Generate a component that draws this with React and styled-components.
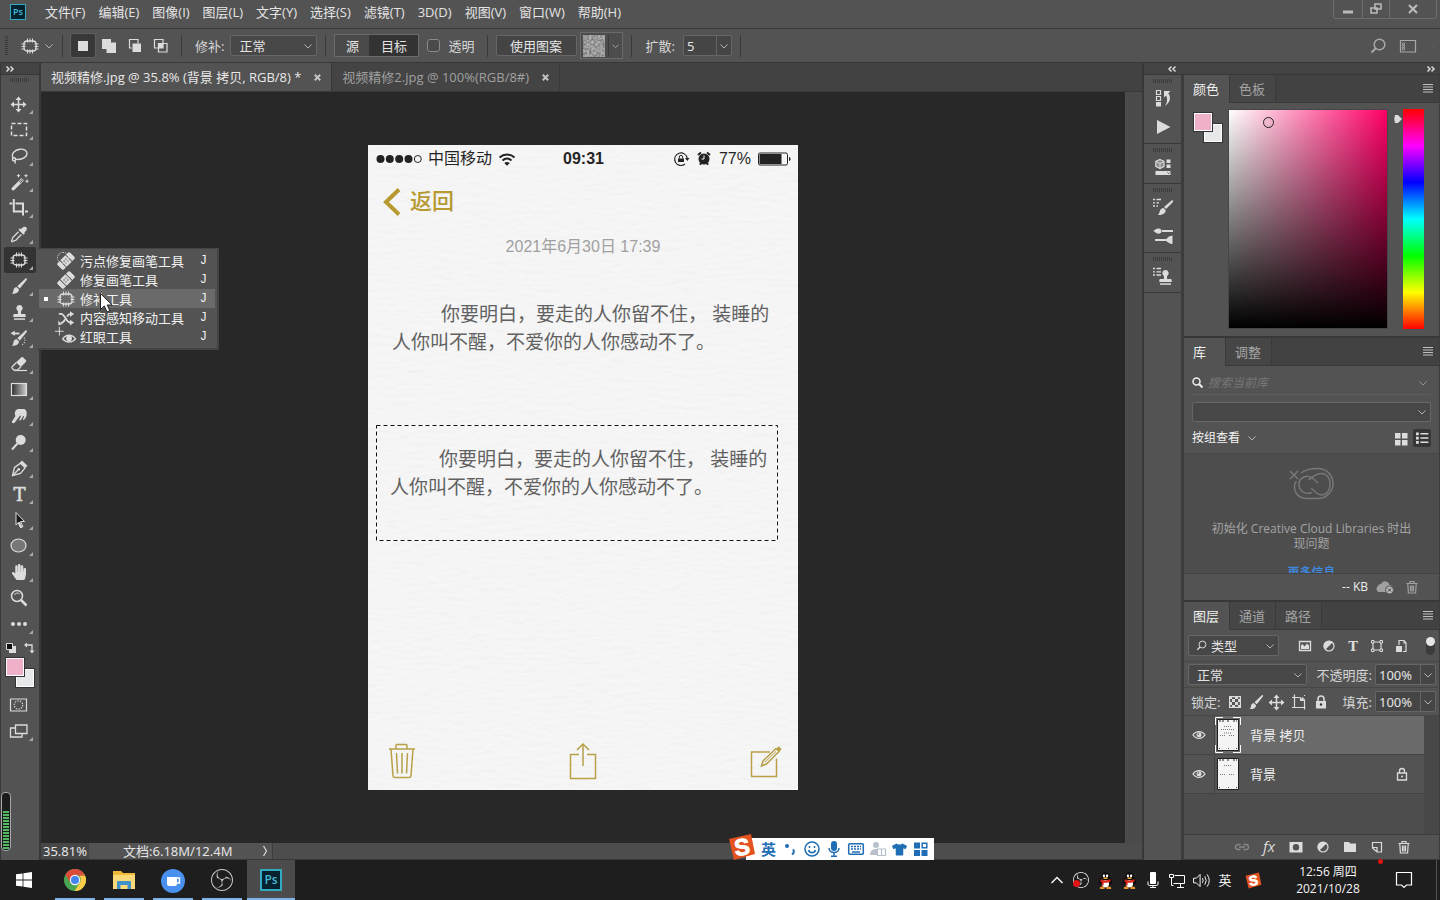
import React from "react";
import styled, { createGlobalStyle } from "styled-components";
import { SiObsstudio } from "react-icons/si";
import { FaBandAid, FaHandPaper, FaTshirt } from "react-icons/fa";

const GlobalStyle = createGlobalStyle`
  * {
    box-sizing: border-box;
  }
  body {
    margin: 0;
    background: #1e1e1e;
    color: #e4e4e4;
    font-family: "Open Sans", "Noto Sans CJK SC", sans-serif;
    font-size: 13px;
    line-height: 18px;
  }
  button, input, select {
    font: inherit;
    color: inherit;
    margin: 0;
    padding: 0;
    border: 0;
    background: none;
    border-radius: 0;
    outline: none;
  }
  svg {
    display: block;
    flex: none;
  }
`;

const Screen = styled.div`
  display: flex;
  flex-direction: column;
  min-height: 100vh;
  background: #535353;
`;

/* ---------- icons ---------- */

const Svg = styled.svg`
  width: ${(p) => p.$w || 20}px;
  height: ${(p) => p.$h || p.$w || 20}px;
  fill: none;
  stroke: ${(p) => p.$color || "#dcdcdc"};
  color: ${(p) => p.$color || "#dcdcdc"};
  stroke-width: 1.5;
  overflow: visible;
`;

const solid = { fill: "currentColor", stroke: "none" };

const brushShape = (
  <g {...solid}>
    <path d="M17.6 2.6c.5.4.3 1-.1 1.6L10.800 12.6 8.300 10.3 16.200 2.800c.5-.5 1-.6 1.400-.2z" />
    <path d="M7.400 11l2.700 2.500c-.3 3-3 4.600-7.400 4.300 1.400-.9 1.500-1.800 1.700-3.200.2-1.900 1.400-3.300 3-3.600z" />
  </g>
);

const stampShape = (
  <g {...solid}>
    <path d="M10.5 3a3.2 3.2 0 0 1 2.1 5.600c-.6.6-.8 1.800-.4 3.400h3.300c.8 0 1.200.6 1.200 1.400V15H4.300v-1.600c0-.8.4-1.400 1.200-1.400h3.300c.4-1.600.2-2.800-.4-3.400A3.200 3.200 0 0 1 10.500 3z" />
    <path d="M5 16.300h11v1.500H5z" />
  </g>
);

const shapes = {
  move: (
    <g>
      <path d="M9.500 4v13M3 10.500h13" />
      <path
        {...solid}
        d="M9.500 2.500l3 3.500h-6zM9.500 18.500l3-3.500h-6zM1.500 10.500L5 7.500v6zM17.500 10.500L14 7.500v6z"
      />
    </g>
  ),
  marquee: <path strokeDasharray="4 2" d="M2.5 3.5h15v12h-15z" />,
  lasso: (
    <g strokeWidth="1.4">
      <path d="M4.3 12.2C1.5 8 5.5 3.8 11 3.2c4-.3 6.800 1.3 7 4 .2 3.600-4 6.300-9 6.300-1.300 0-2.300-.2-3.200-.6" />
      <circle cx="5" cy="13.3" r="1.6" />
      <path d="M5.500 14.500c1.200 1.200.8 2 .5 3" />
    </g>
  ),
  wand: (
    <g>
      <path {...solid} d="M12.500 6l2.500 2.400L5 18.300c-1.200.9-3.300-.8-2.300-2.200z" />
      <path d="M12.700 7.500l1 1-2.200 2.200-1-1z" stroke="#535353" strokeWidth="1" />
      <path
        strokeWidth="1"
        d="M9.500 2v3.400M7.800 3.700h3.400M17 2v3.400M15.300 3.700h3.400M18 7.500v3.400M16.300 9.200h3.400"
      />
    </g>
  ),
  crop: <path strokeWidth="2" d="M4.800 1v12.500h9M16 13.500h3M.5 5.500h2.800M6.500 5.500h7.500V17.500" />,
  dropper: (
    <g>
      <path
        {...solid}
        d="M13 4.300c1.600-2 3.200-1.900 4.200-1 1 1 1 2.600-.9 4.200l-1 .9.7.9-1.500 1.500-5-5L11 4.300l.9.9z"
      />
      <path d="M9.500 7.800L4 13.300c-.7.7-.4 1.700-1.500 3.700l.6.7c2-1.200 3-.9 3.700-1.500l5.600-5.700" strokeWidth="1.3" />
    </g>
  ),
  patch: (
    <g>
      <rect x="4" y="5" width="12" height="10" rx="3" strokeWidth="1.3" />
      <path
        strokeWidth="1"
        d="M7.5 2.5v4M10 2.500v4M12.500 2.500v4M7.500 13.500v4M10 13.500v4M12.500 13.500v4M1.500 8h4M1.500 10.500h4M1.500 13h3M14.500 8h4M14.500 10.500h4M15.500 13h3"
      />
    </g>
  ),
  brush: brushShape,
  stamp: stampShape,
  history: (
    <g>
      {brushShape}
      <path {...solid} d="M1.5 5.3l4.3-2.6v5z" />
      <path d="M5 5.5h5.5" strokeWidth="1.8" />
      <path d="M15 9.500c2 2.500 1 5.500-2.500 8" strokeDasharray="1 1.5" strokeWidth="1.2" />
    </g>
  ),
  eraser: (
    <g>
      <path {...solid} d="M12.200 3.500c.6-.6 1.400-.6 2 0l2.600 2.600c.6.6.6 1.400 0 2l-5 4.800-4.700-4.700z" />
      <path d="M7.400 8.500l-4 4c-.7.7-.7 1.400 0 2l1.700 1.700h3.200l3.600-3.500" strokeWidth="1.3" />
      <path d="M5 16.500h13" strokeWidth="1.2" />
    </g>
  ),
  gradient: (
    <g>
      <defs>
        <linearGradient id="ramp">
          <stop offset="0" stopColor="#2c2c2c" />
          <stop offset="1" stopColor="#cfcfcf" />
        </linearGradient>
      </defs>
      <rect x="2.5" y="3.5" width="15" height="12" fill="url(#ramp)" strokeWidth="1.2" />
    </g>
  ),
  smudge: (
    <path
      {...solid}
      d="M9 3h6c2 .5 2.700 2 2.700 4.500 0 3-.8 4.500-2.700 6.300-.8.4-1.400 0-1-.9l1.200-2.600-.9-.4-2.600 4.300c-1 .7-1.600.2-1.300-.7l1.600-3.400-.9-.5-5.300 7c-1.500 1.300-3.700.3-2.700-1.300l3.400-5.300C5.200 7.800 5.700 4.100 9 3z"
    />
  ),
  dodge: (
    <g>
      <circle cx="11.7" cy="8" r="5" {...solid} />
      <path d="M8.500 11.500L3 17.500" strokeWidth="2" />
    </g>
  ),
  pen: (
    <g strokeWidth="1.3">
      <path d="M3.5 17.5L5.5 9.5 11.5 5.200l4.600 4.600-4.600 5.600z" />
      <path d="M3.8 17.200l5.500-5.500" />
      <circle cx="9.8" cy="11.2" r="1.3" {...solid} />
      <path {...solid} d="M13 2.500l5.500 5.300-2 2L11 4.500z" />
    </g>
  ),
  type: (
    <text
      x="10.5"
      y="17"
      textAnchor="middle"
      fill="currentColor"
      strokeWidth="0.6"
      fontFamily="DejaVu Serif"
      fontSize="18"
    >
      T
    </text>
  ),
  path: (
    <g>
      <path d="M7 2.500l8.500 9h-4l2.500 5-2.500 1-2.300-5-2.200 2.500z" fill="#1a1a1a" strokeWidth="1" />
      <path {...solid} d="M11 12l2.500 5.500-2 .8L9 12.500z" />
    </g>
  ),
  ellipse: <ellipse cx="9.5" cy="9.5" rx="7.5" ry="6.5" fill="#777" strokeWidth="1.2" />,
  zoom: (
    <g>
      <circle cx="8" cy="8" r="5.5" />
      <path d="M5.500 7A3 3 0 0 1 10.500 6" strokeWidth="1" />
      <path d="M12 12l5.500 5.500" strokeWidth="2.5" />
    </g>
  ),
  more: (
    <g {...solid}>
      <circle cx="4" cy="10" r="2" />
      <circle cx="10" cy="10" r="2" />
      <circle cx="16" cy="10" r="2" />
    </g>
  ),
  mask: (
    <g strokeWidth="1.2">
      <path d="M1.5 4h16v12h-16z" />
      <circle cx="9.5" cy="10" r="4.2" strokeDasharray="1.3 1.3" />
    </g>
  ),
  screens: (
    <g strokeWidth="1.3">
      <path d="M6 7H1.5v9H13v-3" />
      <path d="M6.5 4H18v8.500H6.500z" />
    </g>
  ),
  shuffle: (
    <g>
      <path
        d="M2 5.500h2.500c4 0 6 9.500 10 9.500h1M4 16c2.500-.5 4-2.500 5-4.500M11 8.500c1-1.700 2-3 4.500-3"
        strokeWidth="2"
      />
      <path {...solid} d="M14.500 2.500L19 5.500l-4.500 3.300zM14.500 12L19 15l-4.500 3.200zM1.500 12.500l3.500 5-3.500.5z" />
    </g>
  ),
  redeye: (
    <g>
      <path d="M2.500 0v9M-2 4.500h9" strokeWidth="1" />
      <path d="M6 12.500c3.500-5 10-5 13.500 0-3.500 4.500-10 4.500-13.500 0z" />
      <circle cx="12.700" cy="12" r="3" {...solid} />
    </g>
  ),
  chevron: <path d="M5.5 8l4.500 4.500L14.500 8" strokeWidth="1.2" />,
  selNew: <path {...solid} d="M5 5h10v10H5z" />,
  selAdd: <path {...solid} d="M3 3h9v3.500h5V17H7.500v-4H3z" />,
  selSub: (
    <g>
      <path d="M13 7.500V3.500H4.500V12H7" strokeWidth="1.2" />
      <path {...solid} d="M7.500 7.500H16V16H7.500z" />
    </g>
  ),
  selInt: (
    <g strokeWidth="1.2">
      <path d="M3.500 3.500H12v8.500H3.500zM7.500 7.500H16V16H7.500z" />
      <path {...solid} d="M7.500 7.500H12V12H7.500z" />
    </g>
  ),
  search: (
    <g>
      <circle cx="11.5" cy="8.5" r="5.3" />
      <path d="M7.800 12.300L3.500 16.500" strokeWidth="2" />
    </g>
  ),
  workspace: (
    <g strokeWidth="1.2">
      <path d="M2.5 4.500h15v11.500h-15z" />
      <path d="M4.500 7h2v2h-2zM4.500 9.500h2v2h-2zM4.500 12h2v2h-2z" strokeWidth=".8" />
    </g>
  ),
  actions: (
    <g>
      <path d="M3.500 2.500h4v4h-4zM3.500 8.500h4v4h-4z" strokeWidth="1.2" />
      <path
        {...solid}
        d="M3 14h5v4.500H3zM11 3h6.500l-2.200 2.300c3 4 2 9.500-3.300 12.500 2.500-3.500 2.500-6.800 1.300-10.300L11 9.500z"
      />
    </g>
  ),
  play: <path {...solid} d="M4 3l13.500 7L4 17z" />,
  cube: (
    <g>
      <path d="M7 2.500l4 1.800v5L7 11.500 2.800 9.300v-5z" strokeWidth="1.2" fill="#8a8a8a" />
      <path d="M3 4.500l4 2 4-2M7 6.500v5" strokeWidth="1" />
      <path {...solid} d="M13.500 2.500h4V6h-4zM13.500 7.500h4V11h-4zM2.500 14h15v4h-15z" />
      <path d="M14.500 15.500l1 1 1-1" stroke="#444" strokeWidth="1" />
    </g>
  ),
  brushes: (
    <g>
      <path strokeWidth="1.3" d="M0 2.500h2M3.500 2.500H8M0 5.800h2M3.500 5.800H6M0 9h2M3.500 9H5" />
      <path
        {...solid}
        d="M20 3.500c.5.5 0 1.500-1 2.500L13 12l-2-2 7-6c.8-.7 1.500-1 2-.5zM10.500 11l2.200 2.200c0 3-3 5-8 4.800 1.300-1 1.500-2 2-3.500.5-2 2-3.500 3.800-3.500z"
      />
    </g>
  ),
  brushSet: (
    <g>
      <path d="M9 5h11M2 14h11" strokeWidth="2" />
      <path
        {...solid}
        d="M0 5c2-.5 3-3 6-2.500 2 .3 2.500 1.500 2.500 2.500S8 7.500 6 7.700C3 8 2 5.500 0 5zM19.500 9.500V18c-3-.2-5-1.500-7-4 2-2.800 4-4.300 7-4.500z"
      />
    </g>
  ),
  cloneSet: (
    <g>
      <path strokeWidth="1.3" d="M0 2.500h2M3.500 2.500H8M0 5.800h2M3.500 5.800H8M0 9h2M3.500 9H8" />
      <g transform="translate(2 1)">{stampShape}</g>
    </g>
  ),
  menu: <path d="M5 5.500h10M5 8h10M5 10.500h10M5 13h10" strokeWidth="1" />,
  grid: <path {...solid} d="M4 4h5.500v5.500H4zM11 4h5.500v5.500H11zM4 11h5.500v5.500H4zM11 11h5.500v5.500H11z" />,
  list: (
    <g>
      <path {...solid} d="M2.500 3h3.500v3.500H2.500zM2.500 8.300h3.500v3.500H2.500zM2.500 13.600h3.500v3.500H2.500z" />
      <path d="M8 4.700h10M8 10h10M8 15.300h10" strokeWidth="1.800" />
    </g>
  ),
  image: (
    <g>
      <path d="M4.500 5.500h11v9h-11z" strokeWidth="1.3" />
      <path {...solid} d="M6 13V9.500L7.500 8l2 2.500L12 7.500l2 2V13z" />
    </g>
  ),
  adjust: (
    <g>
      <circle cx="10" cy="10" r="5" strokeWidth="1.2" />
      <path {...solid} d="M6.200 13.800A5.300 5.300 0 0 1 13.800 6.200z" />
    </g>
  ),
  typeSmall: (
    <text x="10" y="15" textAnchor="middle" {...solid} fontFamily="DejaVu Serif" fontWeight="bold" fontSize="13">
      T
    </text>
  ),
  shape: (
    <g strokeWidth="1.2">
      <path d="M6 6h8v8H6z" />
      <path
        fill="#535353"
        strokeWidth="1"
        d="M4.500 4.500H7V7H4.500zM13 4.500h2.500V7H13zM4.500 13H7v2.500H4.500zM13 13h2.500v2.500H13z"
      />
    </g>
  ),
  smart: (
    <g>
      <path d="M8 9V4.500h5l2 2.200V15.500h-3" strokeWidth="1.2" />
      <path {...solid} d="M12.500 4.500v3H15zM5 10h6v6H5z" />
    </g>
  ),
  checker: (
    <g>
      <path d="M4.600 4.600h10.800v10.800H4.600z" strokeWidth="1.2" />
      <path
        {...solid}
        d="M4 4h3v3H4zM10 4h3v3h-3zM7 7h3v3H7zM13 7h3v3h-3zM4 10h3v3H4zM10 10h3v3h-3zM7 13h3v3H7zM13 13h3v3h-3z"
      />
    </g>
  ),
  artboard: (
    <g strokeWidth="1.2">
      <path d="M5.500 2.500v13h11M3 5.500h8M13 5.500l2.500 2.500v9.500" />
      <path {...solid} d="M11 5l5 4h-5z" />
      <path d="M3 15.500h2M15.500 3v1" />
    </g>
  ),
  lock: (
    <g>
      <path {...solid} d="M5 9h10v7.500H5z" />
      <path d="M7 9V7a3 3 0 0 1 6 0v2" />
      <circle cx="10" cy="12.5" r="1.2" fill="#333" stroke="none" />
    </g>
  ),
  lockOutline: (
    <g strokeWidth="1.3">
      <path d="M5.500 9h9v7h-9zM7.500 9V7a2.500 2.500 0 0 1 5 0v2" />
      <circle cx="10" cy="12.5" r="1" {...solid} />
    </g>
  ),
  eye: (
    <g>
      <path d="M4 10c3-4.500 9-4.500 12 0-3 4.500-9 4.500-12 0z" strokeWidth="1.3" />
      <circle cx="10" cy="9.8" r="2.5" {...solid} />
      <circle cx="9.3" cy="9" r=".8" fill="#444" stroke="none" />
    </g>
  ),
  link: (
    <path
      strokeWidth="1.3"
      d="M8.500 7.500H6a2.500 2.500 0 0 0 0 5h2.500M11.500 7.500H14a2.500 2.500 0 0 1 0 5h-2.500M7 10h6"
    />
  ),
  fx: (
    <text x="10" y="15" textAnchor="middle" {...solid} fontFamily="Open Sans" fontStyle="italic" fontSize="15">
      fx
    </text>
  ),
  layerMask: (
    <path {...solid} fillRule="evenodd" d="M3.500 5h13v10.500h-13zM10 7a3.200 3.200 0 1 0 0 6.400A3.200 3.200 0 0 0 10 7z" />
  ),
  folder: <path {...solid} d="M4 5h5l1.200 1.500H16v8.500H4z" />,
  newLayer: (
    <path d="M5.500 5.500h9v9.500H10l-4.500-4zM5.500 10.500H10V15" strokeWidth="1.2" />
  ),
  trash: (
    <path
      strokeWidth="1.2"
      d="M4.500 6.500h11M8 6.300V4.500h4v1.800M5.800 6.800l.6 9.200h7.200l.6-9.200M8.500 8.500v6M10 8.500v6M11.500 8.500v6"
    />
  ),
};

const Icon = ({ name, size = 20, color }) => (
  <Svg viewBox="0 0 20 20" $w={size} $color={color} aria-hidden="true">
    {shapes[name]}
  </Svg>
);

/* ---------- menu bar ---------- */

const MenuBar = styled.header`
  display: flex;
  align-items: center;
  height: 29px;
  padding-left: 10px;
  border-bottom: 1px solid #383838;
  background: #535353;
`;

const Menus = styled.nav`
  display: flex;
  gap: 13px;
  margin: 0 auto 4px 19px;
`;

const MenuButton = styled.button`
  white-space: nowrap;
`;

const WindowButtons = styled.div`
  display: flex;
  align-self: flex-start;
  height: 19px;
  margin-right: 3px;
  border: 1px solid #6c6c6c;
  border-top: 0;
  border-radius: 0 0 3px 3px;
`;

const WindowButton = styled.button`
  display: grid;
  place-items: center;
  width: ${(p) => p.$width}px;
  & + & {
    border-left: 1px solid #6c6c6c;
  }
`;

const PsTile = styled.span`
  display: grid;
  place-items: center;
  width: ${(p) => p.$size}px;
  height: ${(p) => p.$size}px;
  border: ${(p) => p.$edge}px solid #35a9bf;
  background: #05222e;
  color: #45b8d4;
  font-size: ${(p) => p.$font}px;
  font-weight: 600;
  line-height: 12px;
`;

const MenuLogo = styled.div`
  margin-bottom: 4px;
`;

const menus = [
  "文件(F)",
  "编辑(E)",
  "图像(I)",
  "图层(L)",
  "文字(Y)",
  "选择(S)",
  "滤镜(T)",
  "3D(D)",
  "视图(V)",
  "窗口(W)",
  "帮助(H)",
];

const TopMenu = () => (
  <MenuBar>
    <MenuLogo>
      <PsTile $size={16} $edge={1} $font={9}>
        Ps
      </PsTile>
    </MenuLogo>
    <Menus>
      {menus.map((m) => (
        <MenuButton key={m}>{m}</MenuButton>
      ))}
    </Menus>
    <WindowButtons>
      <WindowButton $width={28} aria-label="最小化">
        <Svg viewBox="0 0 12 12" $w={12} $color="#bababa">
          <path d="M1 9h10" strokeWidth="3" />
        </Svg>
      </WindowButton>
      <WindowButton $width={27} aria-label="还原">
        <Svg viewBox="0 0 12 12" $w={12} $color="#bababa">
          <path d="M5 1h6v5H5zM1 5h6v5H1z" strokeWidth="1.6" />
        </Svg>
      </WindowButton>
      <WindowButton $width={47} aria-label="关闭">
        <Svg viewBox="0 0 12 12" $w={12} $color="#bababa">
          <path d="M2 2l8 8M10 2l-8 8" strokeWidth="2.2" />
        </Svg>
      </WindowButton>
    </WindowButtons>
  </MenuBar>
);

/* ---------- options bar ---------- */

const OptionsBar = styled.div`
  display: flex;
  align-items: center;
  height: 34px;
  padding: 0 3px 0 5px;
  border-bottom: 1px solid #383838;
  background: #535353;
`;

const Grip = styled.span`
  flex: none;
  width: ${(p) => (p.$tall ? 3 : 20)}px;
  height: ${(p) => (p.$tall ? 20 : 4)}px;
  background: repeating-linear-gradient(
    ${(p) => (p.$tall ? "to bottom" : "to right")},
    #3c3c3c 0 1px,
    #535353 1px 2px
  );
`;

const Divider = styled.span`
  width: 1px;
  height: 22px;
  margin: 0 ${(p) => (p.$after === undefined ? 8 : p.$after)}px 0 ${(p) => p.$before || 8}px;
  background: #3a3a3a;
`;

const ModeButton = styled.button`
  display: grid;
  place-items: center;
  width: 26px;
  height: 25px;
  border-radius: 3px;
  border: 1px solid ${(p) => (p.$on ? "#5f5f5f" : "transparent")};
  background: ${(p) => (p.$on ? "#383838" : "none")};
`;

const SelectWrap = styled.span`
  display: inline-grid;
  align-items: center;
  width: ${(p) => (p.$width ? p.$width + "px" : "auto")};
  flex: ${(p) => (p.$width ? "none" : "1")};
  height: ${(p) => p.$height || 21}px;
  border: 1px solid #666;
  border-radius: 2px;
  background: #474747;
  & > * {
    grid-area: 1 / 1;
  }
  & > svg {
    justify-self: end;
    pointer-events: none;
  }
  select {
    appearance: none;
    width: 100%;
    padding-left: ${(p) => (p.$pad === undefined ? 8 : p.$pad)}px;
  }
`;

const Select = ({ label, value, ...rest }) => (
  <SelectWrap {...rest}>
    <select aria-label={label} defaultValue={value}>
      <option>{value}</option>
    </select>
    <Icon name="chevron" size={16} color="#b8b8b8" />
  </SelectWrap>
);

const Label = styled.label`
  white-space: nowrap;
  color: #d6d6d6;
  font-family: "Noto Sans", "Noto Sans CJK SC", sans-serif;
`;

const Segment = styled.div`
  display: flex;
  height: 23px;
  border: 1px solid #6a6a6a;
`;

const SegmentButton = styled.button`
  width: ${(p) => p.$width}px;
  background: ${(p) => (p.$on ? "#333" : "#4a4a4a")};
`;

const Check = styled.input.attrs({ type: "checkbox" })`
  appearance: none;
  width: 13px;
  height: 13px;
  margin: 0 8px;
  border: 1px solid #8a8a8a;
  border-radius: 3px;
  background: #4a4a4a;
`;

const PlainButton = styled.button`
  width: 81px;
  height: 21px;
  border: 1px solid #666;
  border-radius: 2px;
  background: #444;
`;

const PatternButton = styled.button`
  display: flex;
  align-items: center;
  height: 27px;
  margin-left: 3px;
  padding-left: 2px;
  border: 1px solid #6a6a6a;
  background: #4c4c4c;
  & > svg:last-child {
    width: 13px;
  }
`;

const NumberField = styled.div`
  display: flex;
  align-items: center;
  height: 21px;
  border: 1px solid #666;
  border-radius: 2px;
  background: #454545;
  font-family: "Noto Sans", sans-serif;
  input {
    width: ${(p) => p.$width}px;
    padding-left: 3px;
  }
  button {
    width: 15px;
    height: 19px;
    border-left: 1px solid #666;
  }
  svg {
    margin-left: -1px;
  }
`;

const Numeric = ({ id, value, width }) => (
  <NumberField $width={width}>
    <input id={id} defaultValue={value} />
    <button aria-label="展开">
      <Icon name="chevron" size={16} color="#b8b8b8" />
    </button>
  </NumberField>
);

const PushRight = styled.div`
  display: flex;
  align-items: center;
  gap: 10px;
  margin-left: auto;
`;

const Inline = styled.span`
  display: flex;
  align-items: center;
  gap: ${(p) => p.$gap}px;
  padding-left: ${(p) => p.$pad || 0}px;
`;

const ToolOptions = () => (
  <OptionsBar>
    <Grip $tall />
    <Inline $gap={1} $pad={12}>
      <Icon name="patch" />
      <Icon name="chevron" size={16} color="#b8b8b8" />
    </Inline>
    <Divider $before={5} $after={7} />
    <ModeButton $on aria-label="新选区">
      <Icon name="selNew" />
    </ModeButton>
    <ModeButton aria-label="添加到选区">
      <Icon name="selAdd" />
    </ModeButton>
    <ModeButton aria-label="从选区减去">
      <Icon name="selSub" />
    </ModeButton>
    <ModeButton aria-label="与选区交叉">
      <Icon name="selInt" />
    </ModeButton>
    <Divider $before={7} $after={13} />
    <Inline $gap={6}>
      <Label>修补:</Label>
      <Select label="修补" value="正常" $width={87} />
    </Inline>
    <Divider />
    <Segment>
      <SegmentButton $width={34}>源</SegmentButton>
      <SegmentButton $width={49} $on>
        目标
      </SegmentButton>
    </Segment>
    <Check id="clear" />
    <Label htmlFor="clear">透明</Label>
    <Divider $before={12} />
    <PlainButton>使用图案</PlainButton>
    <PatternButton aria-label="图案">
      <Svg viewBox="0 0 22 22" $w={22}>
        <filter id="weave" x="0" y="0" width="1" height="1">
          <feTurbulence type="fractalNoise" baseFrequency="0.45" numOctaves="2" seed="4" />
          <feColorMatrix values="1 0 0 0 0  1 0 0 0 0  1 0 0 0 0  0 0 0 0 1" />
        </filter>
        <rect width="22" height="22" filter="url(#weave)" stroke="none" opacity="0.7" />
      </Svg>
      <Divider $before={3} $after={0} />
      <Icon name="chevron" size={16} color="#b8b8b8" />
    </PatternButton>
    <Divider $after={14} />
    <Inline $gap={8}>
      <Label htmlFor="diffuse">扩散:</Label>
      <Numeric id="diffuse" value="5" width={32} />
    </Inline>
    <Divider />
    <PushRight>
      <Icon name="search" color="#a8a8a8" />
      <Icon name="workspace" color="#a8a8a8" />
      <Icon name="chevron" size={9} color="#6a6a6a" />
    </PushRight>
  </OptionsBar>
);

/* ---------- tool box ---------- */

const Workspace = styled.main`
  display: flex;
  flex: 1;
`;

const ToolColumn = styled.aside`
  position: relative;
  flex: none;
  width: 41px;
  border-right: 2px solid #383838;
  border-left: 1px solid #383838;
`;

const DockHeader = styled.div`
  display: flex;
  align-items: center;
  justify-content: ${(p) => p.$justify || "flex-start"};
  gap: 3px;
  height: 12px;
  padding: 0 5px;
  border-bottom: 1px solid #383838;
  background: #434343;
`;

const Arrows = ({ flip }) => (
  <Svg viewBox="0 0 8 6" $w={8} $h={6}>
    <path d={flip ? "M3.5.5L1 3l2.500 2.500M7.500.5L5 3l2.500 2.500" : "M.5.5L3 3 .5 5.500M4.500.5L7 3 4.500 5.500"} />
  </Svg>
);

const ToolStack = styled.div`
  display: flex;
  flex-direction: column;
  align-items: center;
  padding-top: 3px;
`;

const ToolList = styled.div`
  display: flex;
  flex-direction: column;
  margin-top: 9px;
`;

const ToolCell = styled.div`
  position: relative;
`;

const ToolButton = styled.button`
  display: grid;
  place-items: center;
  width: 32px;
  height: 26px;
  padding-right: 2px;
  border-radius: 2px;
  background: ${(p) => (p.$on ? "#333" : "none")};
`;

const Corner = styled.span`
  position: absolute;
  right: 3px;
  bottom: 3px;
  border: 2px solid transparent;
  border-right-color: #aaa;
  border-bottom-color: #aaa;
`;

const Flyout = styled.ul`
  position: absolute;
  z-index: 3;
  top: 1px;
  left: 34px;
  width: 181px;
  margin: 0;
  padding: 2px 2px 2px 1px;
  list-style: none;
  border: solid #434343;
  border-width: 1px 2px 2px 0;
  background: #535353;
`;

const FlyoutItem = styled.li`
  display: flex;
  align-items: center;
  height: 19px;
  padding: 0 8px 0 5px;
  background: ${(p) => (p.$on ? "#6a6a6a" : "none")};
  color: #f2f2f2;
`;

const Bullet = styled.span`
  width: 4px;
  height: 4px;
  margin-right: 8px;
  background: ${(p) => (p.$on ? "#fff" : "none")};
`;

const FlyoutIcon = styled.span`
  display: grid;
  place-items: center;
  width: 20px;
  margin-right: 4px;
  color: #dcdcdc;
`;

const Shortcut = styled.kbd`
  margin-left: auto;
  font-family: "Liberation Mono", monospace;
  font-size: 12px;
`;

const Pointer = styled.div`
  position: absolute;
  top: 44px;
  left: 62px;
`;

const Bandage = styled(FaBandAid)`
  width: 18px;
  height: 18px;
  transform: rotate(-45deg);
`;

const SpotBandage = styled.span`
  position: relative;
  &::before {
    content: "";
    position: absolute;
    top: 0;
    left: 0;
    width: 10px;
    height: 10px;
    border: 1px dotted #dcdcdc;
    border-radius: 50%;
  }
`;

const flyoutItems = [
  {
    label: "污点修复画笔工具",
    icon: (
      <SpotBandage>
        <Bandage />
      </SpotBandage>
    ),
  },
  { label: "修复画笔工具", icon: <Bandage /> },
  { label: "修补工具", icon: <Icon name="patch" />, on: true },
  { label: "内容感知移动工具", icon: <Icon name="shuffle" size={18} /> },
  { label: "红眼工具", icon: <Icon name="redeye" size={19} /> },
];

const HealingMenu = () => (
  <Flyout>
    {flyoutItems.map((item) => (
      <FlyoutItem key={item.label} $on={item.on}>
        <Bullet $on={item.on} />
        <FlyoutIcon>{item.icon}</FlyoutIcon>
        {item.label}
        <Shortcut>J</Shortcut>
      </FlyoutItem>
    ))}
    <Pointer>
      <Svg viewBox="0 0 13 20" $w={13} $h={20}>
        <path
          d="M.5.5v16l3.800-3.600L7 19l2.800-1.200-2.600-5.800h5z"
          fill="#fff"
          stroke="#222"
          strokeWidth="1"
        />
      </Svg>
    </Pointer>
  </Flyout>
);

const tools = [
  "move",
  "marquee",
  "lasso",
  "wand",
  "crop",
  "dropper",
  "patch",
  "brush",
  "stamp",
  "history",
  "eraser",
  "gradient",
  "smudge",
  "dodge",
  "pen",
  "type",
  "path",
  "ellipse",
  "hand",
  "zoom",
  "more",
];

const SwatchTools = styled.div`
  display: flex;
  align-items: center;
  justify-content: space-between;
  width: 28px;
  height: 18px;
  margin-top: 2px;
`;

const Swatches = styled.div`
  position: relative;
  flex: none;
  width: 30px;
  height: 31px;
`;

const Swatch = styled.button`
  position: absolute;
  ${(p) => (p.$front ? "top: 0; left: 0; z-index: 1;" : "right: 0; bottom: 0;")}
  width: 20px;
  height: 20px;
  border: 1px solid #333;
  outline: 1px solid #fff;
  outline-offset: -2px;
  background: ${(p) => p.$color};
`;

const ExtraTools = styled.div`
  margin-top: 4px;
`;

const Meter = styled.div`
  position: absolute;
  bottom: 9px;
  left: 0;
  display: flex;
  align-items: flex-end;
  width: 10px;
  height: 59px;
  padding: 1px;
  border: 1px solid #a8a8a8;
  border-radius: 4px;
  background: #1c1c1c;
`;

const MeterLevel = styled.div`
  width: 100%;
  height: 70%;
  background: repeating-linear-gradient(to top, #52b862 0 2px, #1c1c1c 2px 3px);
`;

const ColorPair = () => (
  <Swatches>
    <Swatch $front $color="#f0b0ca" aria-label="前景色" />
    <Swatch $color="#e6e8ea" aria-label="背景色" />
  </Swatches>
);

const ToolBox = () => (
  <ToolColumn>
    <DockHeader>
      <Arrows />
    </DockHeader>
    <ToolStack>
      <Grip />
      <ToolList>
        {tools.map((tool) => (
          <ToolCell key={tool}>
            <ToolButton $on={tool === "patch"} aria-label={tool}>
              {tool === "hand" ? <FaHandPaper size={16} color="#dcdcdc" /> : <Icon name={tool} />}
            </ToolButton>
            {tool !== "zoom" && <Corner />}
            {tool === "patch" && <HealingMenu />}
          </ToolCell>
        ))}
      </ToolList>
      <SwatchTools>
        <Svg viewBox="0 0 10 10" $w={10}>
          <path {...solid} d="M3 3h7v7H3z" />
          <path d="M.5.5h6v6h-6z" fill="#111" strokeWidth="1" />
        </Svg>
        <Svg viewBox="0 0 10 10" $w={10}>
          <path d="M2 2h6v6" strokeWidth="1.3" />
          <path {...solid} d="M0 2l3-2.500v5zM8 10.500L5.500 7.500h5z" />
        </Svg>
      </SwatchTools>
      <ColorPair />
      <ExtraTools>
        <ToolButton aria-label="快速蒙版">
          <Icon name="mask" />
        </ToolButton>
        <ToolCell>
          <ToolButton aria-label="屏幕模式">
            <Icon name="screens" />
          </ToolButton>
          <Corner />
        </ToolCell>
      </ExtraTools>
    </ToolStack>
    <Meter>
      <MeterLevel />
    </Meter>
  </ToolColumn>
);

/* ---------- document ---------- */

const DocumentArea = styled.section`
  display: flex;
  flex: 1;
  flex-direction: column;
  min-width: 0;
  border-right: 1px solid #383838;
`;

const DocTabs = styled.div`
  display: flex;
  height: 29px;
  border-bottom: 1px solid #383838;
  background: #424242;
`;

const DocTab = styled.div`
  display: flex;
  align-items: center;
  gap: 13px;
  padding: 0 10px;
  border-right: 1px solid #383838;
  background: ${(p) => (p.$on ? "#535353" : "#444")};
  color: ${(p) => (p.$on ? "#e8e8e8" : "#a0a0a0")};
  white-space: nowrap;
`;

const CloseTab = styled.button`
  display: grid;
  place-items: center;
  width: 7px;
`;

const CanvasRow = styled.div`
  display: flex;
  flex: 1;
`;

const Canvas = styled.div`
  display: flex;
  flex: 1;
  align-items: center;
  justify-content: center;
  background: #282828;
`;

const ScrollTrack = styled.div`
  width: 17px;
  background: #4b4b4b;
`;

const StatusBar = styled.footer`
  display: flex;
  align-items: center;
  height: 17px;
  border-bottom: 1px solid #383838;
  background: #4d4d4d;
  font-family: "Noto Sans", "Noto Sans CJK SC", sans-serif;
  line-height: 16px;
`;

const ZoomInput = styled.input`
  width: 48px;
  padding-left: 2px;
  background: #464646;
`;

const DocInfo = styled.div`
  display: flex;
  align-items: center;
  justify-content: space-between;
  width: 184px;
  height: 16px;
  padding: 0 4px 0 34px;
  border-right: 1px solid #3c3c3c;
  background: #535353;
`;

const Paper = styled.article`
  position: relative;
  display: flex;
  flex-direction: column;
  width: 430px;
  min-height: 645px;
  background: #f6f6f6;
  color: #555;
  font-family: "Liberation Sans", "Noto Sans CJK SC", sans-serif;
`;

const Grain = styled.svg`
  position: absolute;
  inset: 0;
  width: 100%;
  height: 100%;
  opacity: 0.08;
`;

const PhoneStatus = styled.div`
  display: grid;
  grid-template-columns: 1fr auto 1fr;
  align-items: center;
  height: 28px;
  padding: 0 7px 0 8px;
  color: #111;
  font-size: 16px;
`;

const StatusGroup = styled.div`
  display: flex;
  align-items: center;
  justify-content: ${(p) => (p.$end ? "flex-end" : "flex-start")};
  gap: ${(p) => (p.$end ? 7 : 6)}px;
`;

const BackButton = styled.button`
  display: flex;
  align-items: center;
  gap: 9px;
  height: 56px;
  padding: 1px 0 0 15px;
  color: #b29320;
  font-size: 22px;
  font-weight: 500;
`;

const NoteDate = styled.time`
  padding: 9px 0 45px;
  color: #9a9a9a;
  font-size: 16px;
  line-height: 18px;
  text-align: center;
`;

const NoteText = styled.p`
  margin: 0;
  padding: 0 24px 89px ${(p) => p.$left}px;
  font-size: 19px;
  line-height: 28px;
  text-indent: 49px;
  white-space: pre;
`;

const Marquee = styled.svg`
  position: absolute;
  top: 280px;
  left: 8px;
  width: 402px;
  height: 116px;
`;

const NoteActions = styled.div`
  display: flex;
  align-items: center;
  justify-content: space-between;
  margin-top: auto;
  padding: 0 16px 10px 20px;
`;

const ActionButton = styled.button`
  display: block;
`;

const note = "你要明白，要走的人你留不住， 装睡的\n人你叫不醒，不爱你的人你感动不了。";
const gold = "#b39a3a";

const PhoneNote = () => (
  <Paper>
    <Grain>
      <filter id="paper">
        <feTurbulence type="fractalNoise" baseFrequency="0.07 0.22" numOctaves="3" />
        <feDiffuseLighting lightingColor="#fff" surfaceScale="1.5">
          <feDistantLight azimuth="90" elevation="60" />
        </feDiffuseLighting>
      </filter>
      <rect width="100%" height="100%" filter="url(#paper)" />
    </Grain>
    <PhoneStatus>
      <StatusGroup>
        <Svg viewBox="0 0 46 10" $w={46} $h={10} $color="#111">
          <g {...solid}>
            <circle cx="4.5" cy="5" r="4" />
            <circle cx="13.8" cy="5" r="4" />
            <circle cx="23.2" cy="5" r="4" />
            <circle cx="32.5" cy="5" r="4" />
          </g>
          <circle cx="41.8" cy="5" r="3.5" strokeWidth="1" />
        </Svg>
        <span>中国移动</span>
        <Svg viewBox="0 0 18 13" $w={18} $h={13} $color="#111">
          <path d="M1.500 4.500c4.500-4 10.500-4 15 0M4.500 7.500c2.700-2.400 6.300-2.400 9 0" strokeWidth="2" />
          <path {...solid} d="M9 12.800L6.300 10c1.600-1.400 3.800-1.400 5.400 0z" />
        </Svg>
      </StatusGroup>
      <b>09:31</b>
      <StatusGroup $end>
        <Svg viewBox="0 0 16 16" $w={16} $color="#111">
          <path d="M12 13A6.300 6.300 0 1 1 14.200 7.500" strokeWidth="1.1" />
          <path {...solid} d="M12 7h4.500l-2.200 3zM5 7.500h6V11H5z" />
          <path d="M6.300 7.500V6a1.600 1.600 0 0 1 3.300 0v1.500" strokeWidth="1" />
        </Svg>
        <Svg viewBox="0 0 16 16" $w={16} $color="#111">
          <circle cx="8" cy="8" r="5.5" {...solid} />
          <path d="M2 4l3-2.500M14 4l-3-2.500M4 13.800l1-1.500M12 13.800l-1-1.500" strokeWidth="2" />
          <path d="M8 4.500V8H5.500" stroke="#fff" strokeWidth="1" />
        </Svg>
        <span>77%</span>
        <Svg viewBox="0 0 33 14" $w={33} $h={14} $color="#111">
          <rect x=".5" y="1" width="29" height="12" rx="1.5" strokeWidth="1" />
          <path {...solid} d="M1.500 2h22v10h-22zM31 5c2 .5 2 3.500 0 4z" />
        </Svg>
      </StatusGroup>
    </PhoneStatus>
    <BackButton>
      <Svg viewBox="0 0 18 28" $w={18} $h={28} $color="#b29320">
        <path d="M16 1.500L3 14l13 12.500" strokeWidth="4" />
      </Svg>
      返回
    </BackButton>
    <NoteDate>2021年6月30日 17:39</NoteDate>
    <NoteText $left={24}>{note}</NoteText>
    <NoteText $left={22}>{note}</NoteText>
    <Marquee>
      <rect x=".5" y=".5" width="401" height="115" fill="none" stroke="#fff" />
      <rect x=".5" y=".5" width="401" height="115" fill="none" stroke="#111" strokeDasharray="4 3" />
    </Marquee>
    <NoteActions>
      <ActionButton aria-label="删除">
        <Svg viewBox="0 0 28 36" $w={28} $h={36} $color={gold}>
          <path d="M1 6h26M8 5.500V2.500q0-1 1-1h9q1 0 1 1v3M3 6.500l2 26q.2 2 2 2h14q1.800 0 2-2l2-26M8.500 10l1 20.500M14 10v20.500M19.500 10l-1 20.500" />
        </Svg>
      </ActionButton>
      <ActionButton aria-label="分享">
        <Svg viewBox="0 0 28 38" $w={28} $h={38} $color={gold}>
          <path d="M10 12.500H1.500v24h25v-24H18M14 24V2.500M8 8l6-6 6 6" />
        </Svg>
      </ActionButton>
      <ActionButton aria-label="编辑">
        <Svg viewBox="0 0 32 34" $w={32} $h={34} $color={gold}>
          <path d="M20 8H1.500v24.500h25V14.500" />
          <path d="M11.500 22l1.500-5L26 4.500l3 3L16.500 20z" />
          <path d="M27.500 3.500l3 3" strokeWidth="3.5" />
          <path d="M14.500 18.500L26 7.500" strokeWidth="1" />
        </Svg>
      </ActionButton>
    </NoteActions>
  </Paper>
);

const CrossIcon = () => (
  <Svg viewBox="0 0 7 7" $w={7} $color="#c4c4c4">
    <path d="M.8.8l5.400 5.400M6.200.8L.8 6.200" strokeWidth="2" />
  </Svg>
);

const Document = () => (
  <DocumentArea>
    <DocTabs>
      <DocTab $on>
        视频精修.jpg @ 35.8% (背景 拷贝, RGB/8) *
        <CloseTab aria-label="关闭">
          <CrossIcon />
        </CloseTab>
      </DocTab>
      <DocTab>
        视频精修2.jpg @ 100%(RGB/8#)
        <CloseTab aria-label="关闭">
          <CrossIcon />
        </CloseTab>
      </DocTab>
    </DocTabs>
    <CanvasRow>
      <Canvas>
        <PhoneNote />
      </Canvas>
      <ScrollTrack />
    </CanvasRow>
    <StatusBar>
      <ZoomInput aria-label="缩放" defaultValue="35.81%" />
      <DocInfo>
        文档:6.18M/12.4M
        <Svg viewBox="0 0 6 12" $w={6} $h={12}>
          <path d="M1.500 1l3 5-3 5" strokeWidth="1.2" />
        </Svg>
      </DocInfo>
    </StatusBar>
  </DocumentArea>
);

/* ---------- docks ---------- */

const Docks = styled.aside`
  flex: none;
  display: flex;
  flex-direction: column;
  width: 297px;
  border-left: 1px solid #383838;
`;

const DockArrowsLeft = styled.span`
  padding-left: 19px;
`;

const DockRow = styled.div`
  display: flex;
  flex: 1;
`;

const IconDock = styled.div`
  width: 37px;
`;

const IconGroup = styled.div`
  display: flex;
  flex-direction: column;
  align-items: center;
  padding: 4px 0 2px;
  border-bottom: 1px solid #383838;
`;

const DockButton = styled.button`
  display: grid;
  place-items: center;
  width: 37px;
  height: 29px;
`;

const Panels = styled.div`
  display: flex;
  flex: 1;
  flex-direction: column;
  border-left: 3px solid #3c3c3c;
  border-right: 1px solid #3c3c3c;
`;

const Panel = styled.section`
  display: flex;
  flex-direction: column;
  flex: ${(p) => (p.$grow ? 1 : "none")};
  & + & {
    border-top: 2px solid #383838;
  }
`;

const PanelTabs = styled.div`
  display: flex;
  height: 28px;
  border-bottom: 1px solid #3a3a3a;
  background: #424242;
  & > svg {
    align-self: center;
    margin: 0 1px 0 auto;
  }
`;

const PanelTab = styled.button`
  min-width: 42px;
  height: ${(p) => (p.$on ? 28 : 27)}px;
  padding: 0 10px 0 9px;
  border-right: 1px solid #3a3a3a;
  background: ${(p) => (p.$on ? "#535353" : "#464646")};
  color: ${(p) => (p.$on ? "#f0f0f0" : "#a4a4a4")};
  text-align: left;
`;

const PanelHead = ({ tabs }) => (
  <PanelTabs>
    {tabs.map((tab, i) => (
      <PanelTab key={tab} $on={i === 0}>
        {tab}
      </PanelTab>
    ))}
    <Icon name="menu" color="#c0c0c0" />
  </PanelTabs>
);

const ColorBody = styled.div`
  display: flex;
  padding: 6px 15px 7px 9px;
`;

const ColorField = styled.div`
  position: relative;
  flex: 1;
  height: 220px;
  margin: 0 15px 0 5px;
  border: 1px solid #464646;
  background: linear-gradient(to bottom, transparent, #000), linear-gradient(to right, #fff, #ff0066);
`;

const Picker = styled.span`
  position: absolute;
  top: 7px;
  left: 34px;
  width: 11px;
  height: 11px;
  border: 1px solid #222;
  border-radius: 50%;
`;

const HueBar = styled.div`
  position: relative;
  width: 21px;
  background: linear-gradient(#f00, #f0f, #00f, #0ff, #0f0, #ff0, #f00);
`;

const HueMarker = styled.span`
  position: absolute;
  top: 6px;
  left: -9px;
`;

const SwatchSpace = styled.div`
  padding-top: 3px;
`;

const LibraryTop = styled.div`
  display: flex;
  flex-direction: column;
  padding: 4px 8px 0;
  border-bottom: 1px solid #474747;
`;

const SearchBox = styled.label`
  display: flex;
  align-items: center;
  gap: 5px;
  height: 25px;
  margin-bottom: 7px;
  padding-top: 1px;
  border-bottom: 1px solid #5e5e5e;
  input {
    flex: 1;
    min-width: 0;
    font-size: 12px;
    font-style: italic;
  }
  input::placeholder {
    color: #777;
  }
`;

const ViewRow = styled.div`
  display: flex;
  align-items: center;
  height: 31px;
  gap: 4px;
  color: #f2f2f2;
  font-size: 12px;
`;

const ViewButton = styled.button`
  display: grid;
  place-items: center;
  width: 18px;
  height: 18px;
  margin-left: ${(p) => (p.$push ? "auto" : 0)};
  border-radius: 2px;
  background: ${(p) => (p.$on ? "#363636" : "none")};
`;

const LibraryBody = styled.div`
  height: 120px;
  padding-top: 12px;
  overflow: hidden;
  border-bottom: 1px solid #434343;
  background: #4d4d4d;
  color: #a4a4a4;
  font-size: 12px;
  line-height: 15px;
  text-align: center;
  svg {
    margin: 0 auto;
  }
  p {
    margin: 19px auto 0;
    width: 200px;
  }
`;

const MoreLink = styled.a`
  display: block;
  margin-top: 14px;
  color: #3f86dc;
  font-weight: 600;
  text-decoration: none;
`;

const LibraryFoot = styled.div`
  display: flex;
  align-items: center;
  justify-content: flex-end;
  gap: 7px;
  height: 26px;
  padding-right: 17px;
  color: #eee;
  font-size: 12px;
`;

const LayerRow = styled.div`
  display: flex;
  align-items: center;
  justify-content: space-between;
  height: ${(p) => p.$height}px;
  padding: 0 3px 0 4px;
  border-bottom: 1px solid #474747;
`;

const FilterType = styled.div`
  display: flex;
  align-items: center;
  width: 91px;
  height: 21px;
  padding-left: 6px;
  border: 1px solid #666;
  border-radius: 2px;
  background: #474747;
  ${SelectWrap} {
    border: 0;
    height: 19px;
    background: none;
  }
`;

const FilterIcons = styled.div`
  display: flex;
  gap: 4px;
`;

const Toggle = styled.button`
  display: flex;
  width: 9px;
  height: 18px;
  margin-right: 1px;
  border-radius: 5px;
  background: #3c3c3c;
  &::before {
    content: "";
    width: 9px;
    height: 9px;
    border-radius: 50%;
    background: #e6e6e6;
  }
`;

const LockIcons = styled.div`
  display: flex;
  align-items: center;
  gap: 2px;
`;

const LayerList = styled.ul`
  flex: 1;
  margin: 0;
  padding: 0 15px 0 0;
  list-style: none;
  background: linear-gradient(to left, #484848 15px, #4d4d4d 15px);
`;

const Layer = styled.li`
  display: flex;
  align-items: center;
  height: 39px;
  border-bottom: 1px solid #434343;
  background: ${(p) => (p.$on ? "#6a6a6a" : "#535353")};
`;

const EyeCell = styled.button`
  display: grid;
  place-items: center;
  width: 31px;
  height: 38px;
  border-right: 1px solid #434343;
  background: #535353;
`;

const LayerName = styled.span`
  flex: 1;
  padding-left: 9px;
  color: #f0f0f0;
`;

const LayerLock = styled.span`
  padding-right: 12px;
`;

const PanelFoot = styled.div`
  display: flex;
  align-items: center;
  justify-content: flex-end;
  gap: 7px;
  height: 26px;
  padding-right: 25px;
  border-top: 1px solid #3e3e3e;
  border-bottom: 1px solid #383838;
`;

const Thumb = ({ framed }) => (
  <Svg viewBox="0 0 26 36" $w={26} $h={36}>
    <path d="M2.500 2.500h21v31h-21z" fill="#f4f4f4" stroke="#222" strokeWidth="1" />
    <path d="M4 4h5M12 4h2M18 4h4" stroke="#222" strokeDasharray="2 1" strokeWidth="1" />
    <path d="M9 9.500h8M5 18.500h6M14 18.500h6" stroke="#777" strokeDasharray="1 1" strokeWidth="1" />
    {framed && <path d="M6 12.500h14M9 16h8" stroke="#777" strokeDasharray="1 1" strokeWidth="1" />}
    <path d="M4 31.500h1M13 31.500h1M21 31.500h1" stroke="#555" strokeWidth="1" />
    {framed && <path d="M.5 8V.5H8M18 .5h7.500V8M25.500 28v7.500H18M8 35.500H.5V28" stroke="#fff" strokeWidth="1" />}
  </Svg>
);

const ColorPanel = () => (
  <Panel>
    <PanelHead tabs={["颜色", "色板"]} />
    <ColorBody>
      <SwatchSpace>
        <ColorPair />
      </SwatchSpace>
      <ColorField>
        <Picker />
      </ColorField>
      <HueBar>
        <HueMarker>
          <Svg viewBox="0 0 8 8" $w={8}>
            <path {...solid} d="M1 0h3l4 4-4 4H1Q-.5 4 1 0z" />
          </Svg>
        </HueMarker>
      </HueBar>
    </ColorBody>
  </Panel>
);

const LibraryPanel = () => (
  <Panel>
    <PanelHead tabs={["库", "调整"]} />
    <LibraryTop>
      <SearchBox>
        <Svg viewBox="0 0 11 11" $w={11} $color="#eee">
          <circle cx="4.5" cy="4.5" r="3.5" />
          <path d="M7 7l3.500 3.500" strokeWidth="2" />
        </Svg>
        <input placeholder="搜索当前库" />
        <Icon name="chevron" size={16} color="#999" />
      </SearchBox>
      <Select label="库" value="" $height={19} />
      <ViewRow>
        按组查看
        <Icon name="chevron" size={16} color="#b8b8b8" />
        <ViewButton $push aria-label="网格">
          <Icon name="grid" />
        </ViewButton>
        <ViewButton $on aria-label="列表">
          <Icon name="list" size={16} />
        </ViewButton>
      </ViewRow>
    </LibraryTop>
    <LibraryBody>
      <Svg viewBox="0 0 46 36" $w={46} $h={36} $color="#777">
        <path d="M1 5l8 8M9 5l-8 8" />
        <path d="M12 7C15.500 4 22 2.500 29 2.500a15 15 0 0 1 0 30H18C10 32.500 5 27 5.500 20c.2-2 .7-3.500 2-5" />
        <path d="M22 22l5 4.500c7 5.500 14 .5 14-8.500S34.500 6 28 8.500c-5 2-6.500 4-8.500 5.500M29 17l-5-4.500c-6-5-14-1-14 6s7 10.500 13 8" />
      </Svg>
      <p>初始化 Creative Cloud Libraries 时出现问题</p>
      <MoreLink href="#">更多信息</MoreLink>
    </LibraryBody>
    <LibraryFoot>
      -- KB
      <Svg viewBox="0 0 20 14" $w={20} $h={14} $color="#a0a0a0">
        <path {...solid} d="M3.500 12A3.500 3.500 0 0 1 3 6a3 3 0 0 1 3-2A4.500 4.500 0 0 1 14.500 5 4 4 0 0 1 17 12z" />
        <circle cx="14.5" cy="10" r="4" fill="#bbb" stroke="#535353" strokeWidth="1" />
        <path d="M13 8.500l3 3M16 8.500l-3 3" stroke="#333" strokeWidth="1" />
      </Svg>
      <Icon name="trash" color="#a0a0a0" />
    </LibraryFoot>
  </Panel>
);

const LayersPanel = () => (
  <Panel $grow>
    <PanelHead tabs={["图层", "通道", "路径"]} />
    <LayerRow $height={32}>
      <FilterType>
        <Icon name="search" size={13} />
        <Select label="类型" value="类型" $pad={3} />
      </FilterType>
      <FilterIcons>
        <Icon name="image" />
        <Icon name="adjust" />
        <Icon name="typeSmall" />
        <Icon name="shape" />
        <Icon name="smart" />
      </FilterIcons>
      <Toggle aria-label="过滤" />
    </LayerRow>
    <LayerRow $height={26}>
      <Select label="混合模式" value="正常" $width={119} />
      <Inline $gap={3}>
        <Label htmlFor="opacity">不透明度:</Label>
        <Numeric id="opacity" value="100%" width={44} />
      </Inline>
    </LayerRow>
    <LayerRow $height={28}>
      <Inline $gap={5} $pad={3}>
        <Label>锁定:</Label>
        <LockIcons>
          <Icon name="checker" />
          <Icon name="brush" size={18} />
          <Icon name="move" />
          <Icon name="artboard" />
          <Icon name="lock" />
        </LockIcons>
      </Inline>
      <Inline $gap={3}>
        <Label htmlFor="fill">填充:</Label>
        <Numeric id="fill" value="100%" width={44} />
      </Inline>
    </LayerRow>
    <LayerList>
      <Layer $on>
        <EyeCell aria-label="可见性">
          <Icon name="eye" />
        </EyeCell>
        <Thumb framed />
        <LayerName>背景 拷贝</LayerName>
      </Layer>
      <Layer>
        <EyeCell aria-label="可见性">
          <Icon name="eye" />
        </EyeCell>
        <Thumb />
        <LayerName>背景</LayerName>
        <LayerLock>
          <Icon name="lockOutline" />
        </LayerLock>
      </Layer>
    </LayerList>
    <PanelFoot>
      <Icon name="link" color="#888" />
      <Icon name="fx" />
      <Icon name="layerMask" />
      <Icon name="adjust" />
      <Icon name="folder" />
      <Icon name="newLayer" />
      <Icon name="trash" />
    </PanelFoot>
  </Panel>
);

const dockGroups = [["actions", "play"], ["cube"], ["brushes", "brushSet"], ["cloneSet"]];

const RightDocks = () => (
  <Docks>
    <DockHeader $justify="space-between">
      <DockArrowsLeft>
        <Arrows flip />
      </DockArrowsLeft>
      <Arrows />
    </DockHeader>
    <DockRow>
      <IconDock>
        {dockGroups.map((group) => (
          <IconGroup key={group[0]}>
            <Grip />
            {group.map((name) => (
              <DockButton key={name} aria-label={name}>
                <Icon name={name} />
              </DockButton>
            ))}
          </IconGroup>
        ))}
      </IconDock>
      <Panels>
        <ColorPanel />
        <LibraryPanel />
        <LayersPanel />
      </Panels>
    </DockRow>
  </Docks>
);

/* ---------- input method bar ---------- */

const blue = "#1f6db5";

const ImeBar = styled.div`
  position: absolute;
  bottom: 40px;
  left: 728px;
  z-index: 4;
  display: flex;
  align-items: center;
  gap: 6px;
  width: 206px;
  height: 22px;
  padding-left: 33px;
  background: linear-gradient(to right, transparent 18px, #fff 18px);
  color: ${blue};
  font-weight: 700;
  font-size: 15px;
`;

const ImeLogo = styled.span`
  position: absolute;
  bottom: -1px;
  left: 0;
`;

const SogouLogo = ({ size }) => (
  <Svg viewBox="0 0 28 28" $w={size}>
    <path d="M1 6L23 1l4 20L6 27z" fill="#e4521f" stroke="none" />
    <text
      x="14"
      y="22"
      textAnchor="middle"
      transform="rotate(-8 14 14)"
      fill="#fff"
      stroke="#fff"
      strokeWidth="1"
      fontFamily="Liberation Sans"
      fontWeight="bold"
      fontSize="23"
    >
      S
    </text>
  </Svg>
);

const InputMethod = () => (
  <ImeBar>
    <ImeLogo>
      <SogouLogo size={28} />
    </ImeLogo>
    <span>英</span>
    <Svg viewBox="0 0 16 16" $w={16} $color={blue}>
      <circle cx="5" cy="5" r="2" {...solid} />
      <path d="M11 8.500c1.500 1.500 1 3.500-1 5" strokeWidth="2" />
    </Svg>
    <Svg viewBox="0 0 16 16" $w={16} $color={blue}>
      <circle cx="8" cy="8" r="7" />
      <path d="M4.500 9c1 3.500 6 3.500 7 0M5.500 5v2M10.500 5v2" />
    </Svg>
    <Svg viewBox="0 0 16 16" $w={16} $color={blue}>
      <rect x="5" y="0" width="6" height="10" rx="3" {...solid} />
      <path d="M3 7c0 6 10 6 10 0M8 12v3.500M5 15.300h6" />
    </Svg>
    <Svg viewBox="0 0 16 16" $w={16} $color={blue}>
      <rect x="0.7" y="2.7" width="14.6" height="10.6" rx="1" />
      <path d="M3 5.500h10M3 8h10" strokeDasharray="2 1" />
      <path d="M4 11h8" />
    </Svg>
    <Svg viewBox="0 0 16 16" $w={16} $color="#b9c1cc">
      <circle cx="6" cy="4" r="3" {...solid} />
      <path {...solid} d="M0 14c0-8 11-8 12 0z" />
      <path d="M7.500 8h8v6.500h-8zM11.500 8v6" fill="#fff" strokeWidth="1.2" />
    </Svg>
    <FaTshirt size={15} />
    <Svg viewBox="0 0 16 16" $w={16} $color={blue}>
      <path {...solid} d="M1 1.500h6v6H1zM1 9h6v6H1zM8.500 9h6v6h-6z" />
      <path d="M9.200 2.200h4.600v4.600H9.200z" />
    </Svg>
  </ImeBar>
);

/* ---------- taskbar ---------- */

const TaskBar = styled.footer`
  display: flex;
  height: 40px;
  background: #1e1e1e;
  color: #f4f4f4;
`;

const TaskButtons = styled.div`
  display: flex;
  gap: 1px;
  margin-left: 3px;
`;

const TaskButton = styled.button`
  display: flex;
  flex-direction: column;
  align-items: center;
  justify-content: space-between;
  width: 48px;
  height: 40px;
  padding-top: ${(p) => (p.$start ? 12 : 9)}px;
  background: ${(p) => (p.$on ? "#4b4b4b" : "none")};
  &::after {
    content: "";
    width: ${(p) => (p.$on ? 48 : 40)}px;
    height: ${(p) => (p.$start ? 0 : 2)}px;
    background: #7fb2e5;
  }
`;

const Tray = styled.div`
  display: flex;
  align-items: center;
  margin-left: auto;
`;

const TrayIcon = styled.button`
  position: relative;
  display: grid;
  place-items: center;
  width: ${(p) => p.$width || 24}px;
  height: 40px;
  color: #f4f4f4;
`;

const RecDot = styled.span`
  position: absolute;
  ${(p) => (p.$corner ? "top: -4px; right: 3px;" : "bottom: 13px; left: 4px;")}
  width: ${(p) => (p.$corner ? 5 : 7)}px;
  height: ${(p) => (p.$corner ? 5 : 7)}px;
  border-radius: 50%;
  background: #e01515;
`;

const Clock = styled.time`
  position: relative;
  width: 116px;
  font-size: 12px;
  line-height: 17px;
  text-align: center;
`;

const DesktopEdge = styled.span`
  width: 4px;
  height: 40px;
  margin-left: 15px;
  border-left: 1px solid #555;
`;

const Penguin = () => (
  <Svg viewBox="0 0 16 18" $w={15} $h={17}>
    <g stroke="none">
      <path
        d="M8 .5c3 0 4.500 2 4.500 5 1.500 2 3 4.500 2.500 7l-1.500-.5C13 15 11 17 8 17s-5-2-5.500-5L1 12.500c-.5-2.500 1-5 2.500-7C3.500 2.500 5 .5 8 .5z"
        fill="#0a0a0a"
      />
      <ellipse cx="8" cy="12.5" rx="3.8" ry="4" fill="#fff" />
      <path
        d="M3 7.500c3 2 7 2 10 0l.5 2.500c-3 1.500-5.500 1.700-7.500 1.300V14H4v-3.500L2.500 10z"
        fill="#d9261c"
      />
      <ellipse cx="6.3" cy="4" rx="1.2" ry="1.6" fill="#fff" />
      <ellipse cx="9.7" cy="4" rx="1.2" ry="1.6" fill="#fff" />
      <ellipse cx="8" cy="6.5" rx="2.5" ry=".9" fill="#e8a33a" />
      <path d="M2 16.500c1-1.300 4-1.300 5 0V18H2zM9 16.500c1-1.300 4-1.300 5 0V18H9z" fill="#e8922a" />
    </g>
  </Svg>
);

const Windows = () => (
  <Svg viewBox="0 0 16 16" $w={16} $color="#fff">
    <path
      {...solid}
      d="M0 2.300L6.600 1.400V7.600H0zM7.400 1.300L16 0v7.600H7.400zM0 8.400h6.600v6.200L0 13.700zM7.400 8.400H16V16l-8.600-1.300z"
    />
  </Svg>
);

const Chrome = () => (
  <Svg viewBox="0 0 22 22" $w={22}>
    <g stroke="none">
      <circle cx="11" cy="11" r="11" fill="#4aa552" />
      <path d="M11 0a11 11 0 0 1 9.500 5.500H11l-4.700 8.200L1.500 5.500A11 11 0 0 1 11 0z" fill="#dc4a3c" />
      <path d="M20.500 5.500A11 11 0 0 1 10.500 22l5.200-8.300A5.500 5.500 0 0 0 14.500 6z" fill="#fccd46" />
      <path d="M11 5.500h9.500l.5 1.200H14z" fill="#dc4a3c" />
      <circle cx="11" cy="11" r="5.2" fill="#f5f5f5" />
      <circle cx="11" cy="11" r="4" fill="#4285f0" />
    </g>
  </Svg>
);

const Explorer = () => (
  <Svg viewBox="0 0 22 20" $w={22} $h={22}>
    <g stroke="none">
      <path d="M0 1h8l2 2h12v16H0z" fill="#f0b93a" />
      <path d="M1 5h21v14H0V5z" fill="#fbd978" />
      <path d="M4 19v-7q0-1 1-1h12q1 0 1 1v7h-3.500v-4h-7v4z" fill="#3f93c9" />
    </g>
  </Svg>
);

const Meeting = () => (
  <Svg viewBox="0 0 24 24" $w={24}>
    <circle cx="12" cy="12" r="12" fill="#4a90ee" stroke="none" />
    <path d="M6 8h10v7q0 2-2 2H8q-2 0-2-2z" fill="#fff" stroke="none" />
    <path d="M16 9h2.500v5H16" stroke="#fff" />
  </Svg>
);

const Task = () => (
  <TaskBar>
    <TaskButton $start aria-label="开始">
      <Windows />
    </TaskButton>
    <TaskButtons>
      <TaskButton aria-label="Chrome">
        <Chrome />
      </TaskButton>
      <TaskButton aria-label="文件夹">
        <Explorer />
      </TaskButton>
      <TaskButton aria-label="会议">
        <Meeting />
      </TaskButton>
      <TaskButton aria-label="OBS">
        <SiObsstudio size={22} color="#c8c8c8" />
      </TaskButton>
      <TaskButton $on aria-label="Photoshop">
        <PsTile $size={22} $edge={2} $font={12}>
          Ps
        </PsTile>
      </TaskButton>
    </TaskButtons>
    <Tray>
      <TrayIcon aria-label="更多图标">
        <Svg viewBox="0 0 12 12" $w={12} $color="#f4f4f4">
          <path d="M.5 9L6 3.500 11.500 9" />
        </Svg>
      </TrayIcon>
      <TrayIcon aria-label="OBS">
        <SiObsstudio size={16} />
        <RecDot />
      </TrayIcon>
      <TrayIcon aria-label="QQ">
        <Penguin />
      </TrayIcon>
      <TrayIcon aria-label="QQ">
        <Penguin />
      </TrayIcon>
      <TrayIcon aria-label="麦克风">
        <Svg viewBox="0 0 12 16" $w={12} $h={16} $color="#fff">
          <rect x="3" y="0" width="6" height="12" rx="1" {...solid} />
          <path d="M1 9.500v2.500q0 1.500 1.500 1.500h7q1.500 0 1.500-1.500V9.500M6 13.500v2M3 15.500h6" strokeWidth="1" />
        </Svg>
      </TrayIcon>
      <TrayIcon aria-label="网络">
        <Svg viewBox="0 0 16 16" $w={16} $color="#fff">
          <path
            d="M5.500 3.500h10v8H4.500M8 15.500h7M11.500 11.500v4M.5 2.500h4v3h-4zM2.500 5.500v8h2"
            strokeWidth="1"
          />
        </Svg>
      </TrayIcon>
      <TrayIcon aria-label="音量">
        <Svg viewBox="0 0 18 16" $w={17} $h={15} $color="#fff">
          <path
            d="M.5 5.500h3l4-4v13l-4-4h-3zM10 5.500q1.500 2.500 0 5M12.500 3.500q3 4.500 0 9M15 1.500q4.500 6.500 0 13"
            strokeWidth="1"
          />
        </Svg>
      </TrayIcon>
      <TrayIcon>英</TrayIcon>
      <TrayIcon $width={33} aria-label="搜狗">
        <SogouLogo size={17} />
      </TrayIcon>
      <Clock>
        12:56 周四
        <br />
        2021/10/28
        <RecDot $corner />
      </Clock>
      <TrayIcon $width={35} aria-label="通知">
        <Svg viewBox="0 0 18 18" $w={18} $color="#fff">
          <path d="M1.500 1.500h15v12.500h-5L9 16.500 6.500 14h-5z" strokeWidth="1.2" />
        </Svg>
      </TrayIcon>
      <DesktopEdge />
    </Tray>
  </TaskBar>
);

const App = () => (
  <Screen>
    <GlobalStyle />
    <TopMenu />
    <ToolOptions />
    <Workspace>
      <ToolBox />
      <Document />
      <RightDocks />
    </Workspace>
    <InputMethod />
    <Task />
  </Screen>
);

export default App;
